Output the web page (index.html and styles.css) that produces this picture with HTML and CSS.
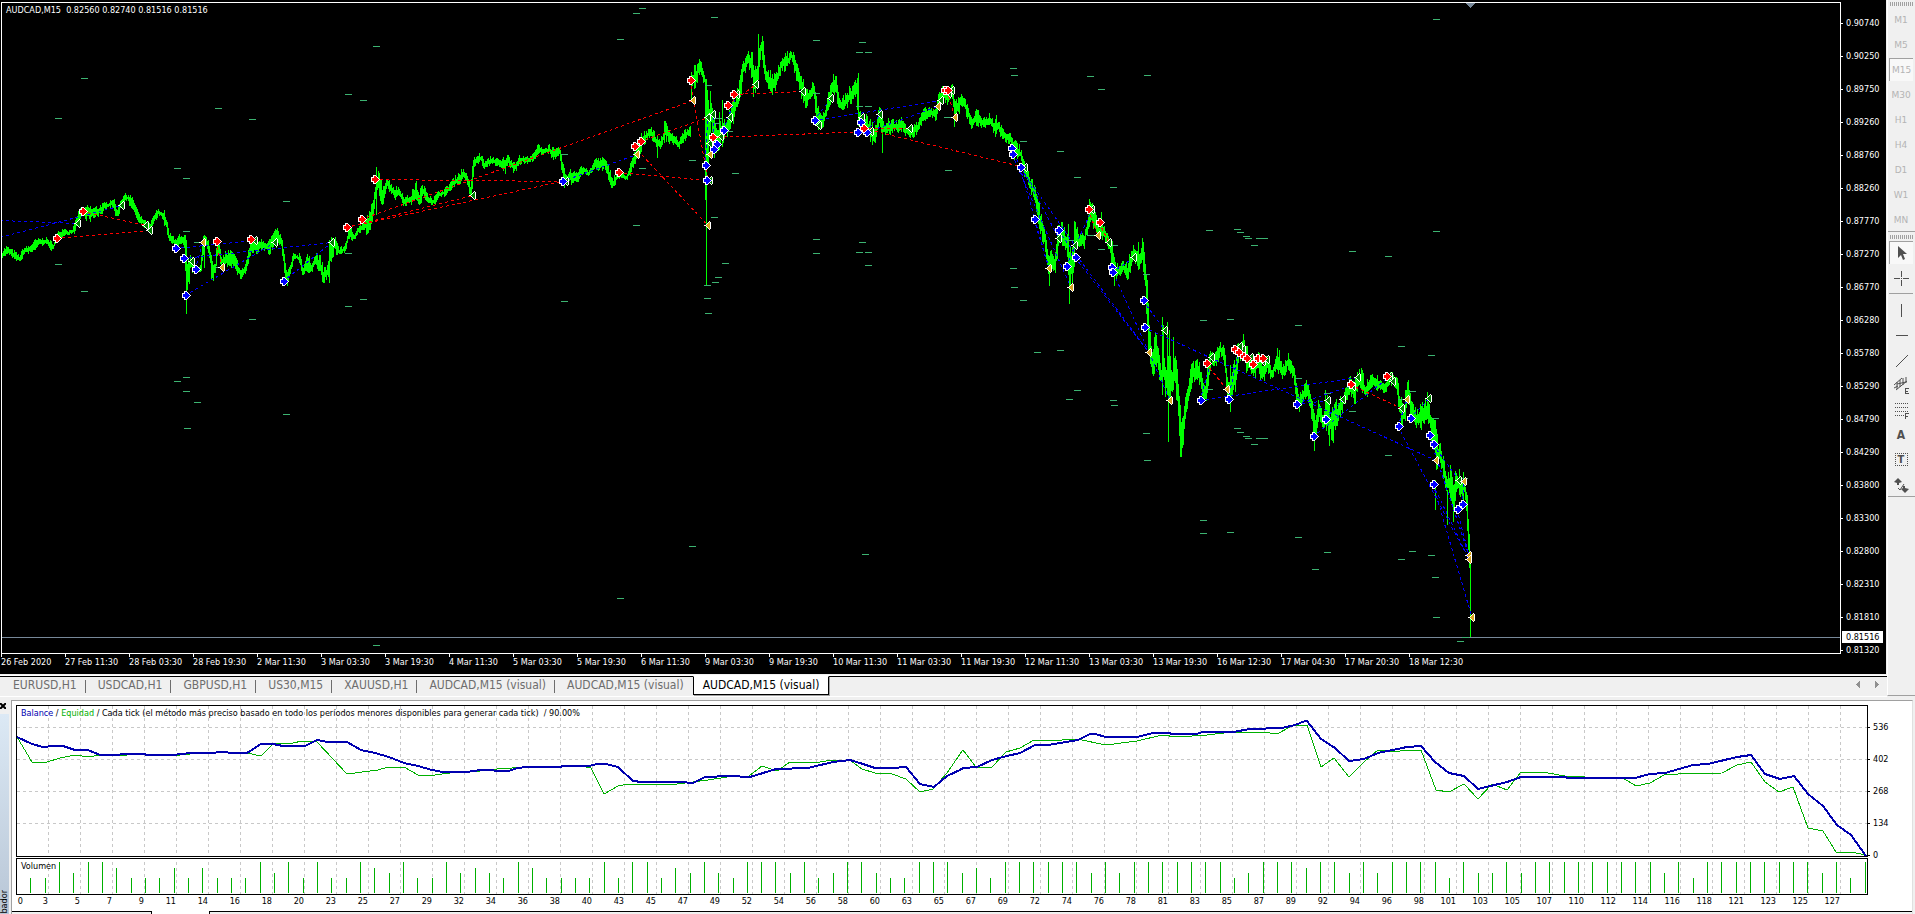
FILE: index.html
```html
<!DOCTYPE html>
<html lang="es">
<head>
	<meta charset="UTF-8">
	<title>AUDCAD,M15 (visual)</title>
	<link rel="stylesheet" href="styles.css">
</head>
<body>

<div class="workspace">
	<main class="window">
		<section class="chart">
			<div class="plot">
				<p class="quote">AUDCAD,M15&nbsp; 0.82560 0.82740 0.81516 0.81516</p>
				<svg class="price" id="price" role="img" aria-label="AUDCAD M15"></svg>
			</div>
			<div class="scale">
				<ol id="prices"></ol>
				<span class="bid">0.81516</span>
			</div>
			<ol class="dates" id="dates"></ol>
		</section>
		<nav class="tabs">
			<a href="#">EURUSD,H1</a>
			<a href="#">USDCAD,H1</a>
			<a href="#">GBPUSD,H1</a>
			<a href="#">US30,M15</a>
			<a href="#">XAUUSD,H1</a>
			<a href="#">AUDCAD,M15 (visual)</a>
			<a href="#">AUDCAD,M15 (visual)</a>
			<a href="#" class="active">AUDCAD,M15 (visual)</a>
			<span class="scroll">
				<button type="button" aria-label="Anterior"><svg width="4" height="7"><path d="M4 0v7L0 3.500z"/></svg></button>
				<button type="button" aria-label="Siguiente"><svg width="4" height="7"><path d="M0 0v7l4-3.500z"/></svg></button>
			</span>
		</nav>
	</main>

	<aside class="toolbar">
		<div class="group">
			<i class="grip"></i>
			<button type="button">M1</button>
			<button type="button">M5</button>
			<button type="button" class="pressed">M15</button>
			<button type="button">M30</button>
			<button type="button">H1</button>
			<button type="button">H4</button>
			<button type="button">D1</button>
			<button type="button">W1</button>
			<button type="button">MN</button>
		</div>
		<div class="group tools">
			<i class="grip"></i>
			<button type="button" class="pressed" aria-label="Cursor"><svg width="18" height="18"><path class="fill" d="M5 2v12l3-3 2 5 2-1-2-5h4z"/></svg></button>
			<button type="button" aria-label="Cruz"><svg width="18" height="18"><path d="M9.500 2v6M9.500 11v6M2 9.500h6M11 9.500h6M9 9.500h1"/></svg></button>
			<i class="rule"></i>
			<button type="button" aria-label="Línea vertical"><svg width="18" height="18"><path d="M9.500 3v13"/></svg></button>
			<button type="button" aria-label="Línea horizontal"><svg width="18" height="18"><path d="M4 9.500h12"/></svg></button>
			<button type="button" aria-label="Línea de tendencia"><svg width="18" height="18"><path class="smooth" d="M4 16L16 4"/></svg></button>
			<button type="button" aria-label="Canal equidistante"><svg width="18" height="18"><path class="smooth" d="M2 9L10 2M4 14L15 5M5 6v7M8 4v7M11 2v7M14 1v6M2 12l4-2M5 8l9-2"/><path d="M13.500 12v6M13 12.500h4M13 15h3M13 17.500h4"/></svg></button>
			<button type="button" aria-label="Fibonacci"><svg width="18" height="18"><path class="dots" d="M3 2.500h13M3 6.500h13M3 10.500h13M3 14.500h9"/><path d="M13.500 12v6M13 12.500h4M13 15.500h3"/></svg></button>
			<button type="button" class="letter" aria-label="Texto">A</button>
			<button type="button" class="letter" aria-label="Etiqueta"><span class="label">T</span></button>
			<button type="button" aria-label="Flechas"><svg width="18" height="18"><path class="fill" d="M2 6l4-4 4 4-3 1v2H5V7zM9 13l2-1v-2h2v2l4 1-4 4z"/><path class="smooth" d="M6 12l2 2 4-6"/></svg></button>
		</div>
	</aside>
</div>

<div class="tester">
	<div class="side">
		<button type="button" aria-label="Cerrar"><svg width="6" height="6"><path d="M0 0l6 6M6 0L0 6"/></svg></button>
		<div class="caption"><span>bador</span></div>
	</div>
	<div class="report">
		<div class="graphs">
			<div class="balance">
				<p class="legend"><b>Balance</b> / <i>Equidad</i> / Cada tick (el método más preciso basado en todo los períodos menores disponibles para generar cada tick)&nbsp; / 90.00%</p>
				<svg id="balance" role="img" aria-label="Balance"></svg>
			</div>
			<ol class="amounts">
				<li>536</li>
				<li>402</li>
				<li>268</li>
				<li>134</li>
				<li>0</li>
			</ol>
			<div class="volume">
				<p class="legend">Volumen</p>
				<svg id="volume" role="img" aria-label="Volumen"></svg>
			</div>
			<ol class="trades" id="trades"></ol>
		</div>
		<div class="sheets"><i></i><i class="open"></i><i></i></div>
	</div>
</div>

<script src="script.js"></script>
</body>
</html>
```

FILE: styles.css
```css
* {
	box-sizing: border-box;
	margin: 0;
	padding: 0;
}

body {
	display: flex;
	flex-flow: column;
	height: 100vh;
	overflow: hidden;
	background: #f0f0f0;
	color: #000;
	font: 9px/12px "DejaVu Sans Condensed", "DejaVu Sans", sans-serif;
}

ol {
	list-style: none;
}

svg {
	display: block;
	shape-rendering: crispEdges;
}

button {
	border: 0;
	background: none;
	font: inherit;
	color: inherit;
}

a {
	color: inherit;
	text-decoration: none;
}

.workspace {
	display: flex;
}

.window {
	flex: 1;
	min-width: 0;
}

/* price chart */

.chart {
	display: grid;
	grid-template-columns: 1fr 45px;
	padding: 2px 0 0 1px;
	margin-right: 1px;
	background: #000;
	color: #fff;
}

.plot {
	position: relative;
	border: 1px solid #fff;
	overflow: hidden;
}

.price {
	width: 100%;
	height: 650px;
}

.quote {
	position: absolute;
	left: 4px;
	top: 1px;
	white-space: pre;
}

.scale {
	position: relative;
	padding-top: 15px;
}

.scale li {
	display: flex;
	align-items: center;
	height: 12px;
	margin-bottom: 21px;
}

.scale li:last-child {
	margin-bottom: -4px;
}

.scale li::before {
	content: "";
	width: 2px;
	height: 1px;
	margin-right: 3px;
	background: #fff;
}

.bid {
	position: absolute;
	left: 1px;
	top: 629px;
	width: 41px;
	padding-left: 4px;
	background: #fff;
	color: #000;
}

.dates {
	grid-column: 1 / 3;
	display: flex;
	height: 20px;
}

.dates li {
	flex: none;
	width: 64px;
	line-height: 10px;
	white-space: nowrap;
}

.dates li::before {
	content: "";
	display: block;
	width: 1px;
	height: 3px;
	background: #fff;
}

/* window tabs */

.tabs {
	display: flex;
	height: 21px;
	margin-top: 2px;
	padding-left: 1px;
	border-top: 1px solid #000;
	border-bottom: 1px solid #fff;
	box-shadow: 0 -1px #fff;
	font-size: 12px;
	line-height: 17px;
	color: #6d6d6d;
}

.tabs a {
	position: relative;
	padding: 0 9px 0 12px;
	white-space: nowrap;
}

.tabs a::after {
	content: "";
	position: absolute;
	right: 0;
	top: 3px;
	width: 1px;
	height: 13px;
	background: #6d6d6d;
}

.tabs a:nth-child(7)::after,
.tabs .active::after {
	display: none;
}

.tabs .active {
	height: 19px;
	margin-top: -1px;
	padding: 0 9px;
	border: 1px solid #000;
	border-top-color: #fff;
	background: #fff;
	box-shadow: 1px 1px #a0a0a0;
	color: #000;
}

.scroll {
	display: flex;
	gap: 15px;
	margin: 0 8px 4px auto;
	fill: #909090;
}

/* toolbar */

.toolbar {
	width: 28px;
	height: 696px;
	border-left: 1px solid #fff;
	border-bottom: 1px solid #a0a0a0;
	color: #b4b4b4;
}

.group {
	display: flex;
	flex-flow: column;
	border-bottom: 1px solid #a0a0a0;
	padding: 2px 2px 0 1px;
}

.group button {
	display: flex;
	align-items: center;
	justify-content: center;
	height: 23px;
	margin-top: 2px;
	font: 9px/12px "DejaVu Sans", sans-serif;
}

.group .pressed {
	border: 1px solid #a0a0a0;
	border-width: 1px 0 0 1px;
	background: #f8f8f8;
}

.grip {
	height: 4px;
	margin-left: 1px;
	background: repeating-linear-gradient(90deg, #a0a0a0 0 1px, transparent 1px 2px);
}

.tools {
	color: #505050;
}

.tools .grip {
	margin-top: 1px;
}

.tools svg {
	fill: none;
	stroke: currentColor;
}

.tools .fill {
	fill: currentColor;
	stroke: none;
	shape-rendering: auto;
}

.tools .smooth {
	shape-rendering: auto;
}

.tools .dots {
	stroke-dasharray: 1 1;
}

.tools .letter {
	font: bold 12px/14px "DejaVu Sans Condensed", sans-serif;
}

.label {
	width: 13px;
	height: 13px;
	border: 1px dotted #505050;
	font-size: 11px;
	line-height: 11px;
}

.rule {
	height: 1px;
	margin: 4px 0 2px;
	background: #a0a0a0;
}

/* strategy tester */

.tester {
	flex: 1;
	display: flex;
	padding-top: 3px;
}

.side {
	display: flex;
	flex-flow: column;
	width: 11px;
}

.side button {
	display: flex;
	align-items: flex-start;
	height: 14px;
	padding-top: 3px;
	stroke: #000;
	stroke-width: 2;
}

.side svg {
	shape-rendering: auto;
}

.caption {
	display: flex;
	align-items: flex-end;
	flex: 1;
	width: 9px;
	background: linear-gradient(#dce9f5, #b8c6d6);
}

.caption span {
	width: 9px;
	line-height: 9px;
	writing-mode: vertical-rl;
	transform: rotate(180deg);
}

.report {
	flex: 1;
	display: flex;
	flex-flow: column;
	min-width: 0;
	margin-right: 2px;
	border: 1px solid #a0a0a0;
	border-width: 1px 1px 0;
	border-right-color: #e0e0e0;
	background: #fff;
}

.graphs {
	flex: 1;
	display: grid;
	grid-template-columns: 1fr 44px;
	align-content: start;
	row-gap: 1px;
	padding: 4px 0 0 4px;
}

.balance,
.volume {
	position: relative;
	border: 1px solid #000;
	overflow: hidden;
}

.balance svg {
	width: 100%;
	height: 150px;
}

.volume {
	grid-column: 1;
}

.volume svg {
	width: 100%;
	height: 35px;
}

.legend {
	position: absolute;
	left: 4px;
	top: 1px;
	white-space: pre;
}

.legend b {
	font-weight: normal;
	color: #0000b0;
}

.legend i {
	font-style: normal;
	color: #00b000;
}

.amounts {
	padding-top: 16px;
	white-space: nowrap;
}

.amounts li {
	display: flex;
	align-items: center;
	height: 12px;
	margin-bottom: 20px;
}

.amounts li:last-child {
	margin-bottom: -8px;
}

.amounts li::before {
	content: "";
	width: 2px;
	height: 1px;
	margin-right: 3px;
	background: #000;
}

.trades {
	display: flex;
	grid-column: 1 / 3;
	line-height: 10px;
}

.trades li {
	flex: none;
	width: 32px;
	text-align: right;
}

.trades li:first-child {
	width: 7px;
	margin-right: -7px;
}

.sheets {
	display: flex;
	height: 3px;
}

.sheets i {
	width: 140px;
	border: 1px solid #000;
	border-width: 1px 1px 0 0;
	background: #f0f0f0;
}

.sheets .open {
	width: 57px;
	border: 0;
	background: #fff;
}

.sheets i:last-child {
	flex: 1;
	border-width: 1px 0 0 1px;
}

/* chart drawing */

.bars { stroke: #0f0; }
.levels { stroke: #3cb371; }
.bid-line { stroke: #778899; }
.shift { fill: #778899; }
.sell-line, .buy-line { fill: none; stroke: #f00; stroke-dasharray: 3 3; }
.buy-line { stroke: #00f; }
.mark { stroke: #fff; stroke-width: 2; stroke-miterlimit: 2; paint-order: stroke; }
.sell { fill: #f00; }
.buy { fill: #00f; }
.close { fill: #008000; }
.stop { fill: #daa520; }

.grid { stroke: #c8c8c8; stroke-dasharray: 3 3; }
.balance-line { fill: none; stroke: #0000b0; stroke-width: 2; }
.equity-line { fill: none; stroke: #00b000; }
.lots { stroke: #00b000; }
```

FILE: script.js
```js
// centre line of the price: x, y, half height of the noise around it
var trend = [
	2,254,3, 6,250,3, 12,254,3, 19,259,3, 23,251,3, 30,249,4, 37,243,3, 43,241,3, 48,243,3, 52,248,2, 57,236,3, 63,231,3,
	67,233,2, 73,230,3, 77,218,4, 80,213,4, 86,213,6, 91,214,5, 97,212,4, 103,207,3, 108,205,3, 112,202,4, 116,214,3,
	119,206,4, 123,199,4, 127,198,4, 132,204,4, 138,218,3, 144,224,3, 150,227,3, 154,217,3, 158,212,2, 163,217,5, 166,226,3,
	168,237,3, 173,241,4, 177,244,5, 180,240,3, 184,243,6, 186,285,10, 188,270,10, 190,262,5, 194,270,3, 200,268,3, 203,240,4,
	207,244,4, 212,272,8, 215,265,4, 217,242,3, 220,262,4, 225,259,6, 230,258,6, 235,264,5, 240,275,3, 245,268,4, 250,246,6,
	256,248,6, 262,244,4, 268,248,6, 273,240,5, 276,235,5, 281,243,3, 284,268,5, 286,280,4, 290,268,3, 293,256,2, 299,258,4,
	302,272,4, 306,262,6, 310,268,4, 315,260,6, 319,264,6, 322,277,6, 327,272,6, 330,250,8, 334,243,5, 338,252,3, 344,249,3,
	349,231,4, 353,238,3, 357,230,3, 361,228,3, 366,224,7, 370,220,8, 373,205,4, 376,180,8, 380,190,8, 382,195,8, 386,183,4,
	390,188,4, 393,193,5, 398,192,4, 404,202,4, 410,200,5, 415,190,6, 418,200,6, 422,190,4, 427,198,4, 432,202,3, 438,195,3,
	444,192,3, 450,186,4, 457,179,5, 464,174,3, 468,186,4, 470,193,4, 472,170,5, 474,162,4, 480,158,3, 484,166,3, 490,160,3,
	496,162,3, 502,165,5, 507,160,4, 513,167,4, 520,160,3, 526,160,3, 532,158,3, 538,148,3, 543,152,3, 548,149,4, 554,155,4,
	559,152,3, 561,165,4, 564,178,4, 570,177,6, 576,176,5, 582,170,3, 588,174,2, 594,164,5, 600,163,5, 604,164,4, 608,174,5,
	612,184,4, 617,176,3, 622,175,2, 626,178,2, 630,168,4, 634,158,5, 638,148,6, 643,138,5, 650,132,4, 656,142,4, 660,144,4,
	664,132,8, 667,134,6, 672,138,4, 678,145,3, 682,137,4, 686,133,3, 690,131,4, 691,80,8, 696,75,6, 698,66,5, 702,73,4,
	705,85,5, 707,140,20, 710,110,15, 713,130,15, 715,137,15, 719,135,12, 723,130,8, 727,126,8, 731,112,12, 734,108,6,
	738,92,6, 740,85,8, 742,70,5, 745,64,8, 747,58,6, 750,64,8, 752,70,10, 754,82,12, 757,72,8, 758,55,10, 760,48,8,
	762,46,8, 764,72,5, 768,80,7, 773,84,6, 776,78,5, 780,66,6, 784,62,7, 788,60,4, 790,55,3, 793,60,6, 796,72,6, 800,85,8,
	805,98,8, 808,97,4, 812,88,4, 814,95,6, 816,115,8, 820,122,6, 824,115,4, 828,100,6, 832,85,7, 835,84,6, 838,104,4,
	842,105,6, 848,98,8, 853,92,6, 857,85,6, 858,115,8, 862,125,5, 865,122,6, 870,132,8, 874,136,6, 879,115,8, 883,130,4,
	888,126,6, 895,127,5, 900,124,5, 905,130,5, 911,132,5, 917,128,4, 922,116,5, 928,112,4, 935,115,4, 938,100,5, 942,92,5,
	946,98,5, 951,90,4, 954,110,8, 960,100,4, 963,102,5, 966,110,5, 971,124,4, 976,115,6, 980,123,4, 985,123,4, 989,120,5,
	993,127,8, 998,127,6, 1003,136,4, 1007,138,4, 1010,139,5, 1014,150,7, 1020,154,4, 1024,170,5, 1030,185,6, 1035,197,7,
	1039,220,8, 1043,235,6, 1045,245,5, 1048,270,8, 1051,258,8, 1054,264,8, 1058,234,6, 1061,232,8, 1066,244,8, 1069,265,18,
	1072,265,14, 1074,240,12, 1078,240,6, 1083,242,6, 1087,225,6, 1090,212,8, 1095,222,8, 1098,232,6, 1102,230,8, 1106,238,5,
	1110,248,8, 1114,268,6, 1118,272,5, 1122,266,5, 1126,273,7, 1131,258,6, 1134,252,8, 1138,260,6, 1142,252,10, 1145,280,10,
	1147,320,15, 1149,345,10, 1152,370,8, 1154,350,12, 1157,355,8, 1160,375,5, 1162,370,15, 1165,375,15, 1168,375,15,
	1171,380,12, 1174,370,15, 1176,380,10, 1178,400,12, 1180,440,12, 1182,430,10, 1186,400,8, 1191,375,8, 1196,370,8,
	1200,375,5, 1203,397,6, 1206,385,8, 1210,358,5, 1214,360,6, 1219,350,6, 1223,352,6, 1227,390,10, 1230,392,12, 1234,375,12,
	1238,350,8, 1243,350,10, 1248,364,5, 1254,370,6, 1258,358,8, 1261,375,8, 1266,362,6, 1271,374,5, 1277,360,8, 1282,372,6,
	1287,362,5, 1293,374,5, 1296,395,6, 1298,405,6, 1302,395,6, 1306,388,5, 1310,405,8, 1314,432,8, 1318,408,6, 1322,425,5,
	1326,410,12, 1330,425,12, 1334,420,12, 1338,412,8, 1343,400,6, 1349,388,8, 1354,392,8, 1358,380,8, 1361,378,8, 1364,392,6,
	1370,383,6, 1378,384,4, 1384,388,4, 1390,378,5, 1396,385,6, 1401,418,10, 1404,410,10, 1407,388,5, 1410,405,8, 1415,420,8,
	1420,415,10, 1427,408,10, 1430,425,10, 1434,435,10, 1436,460,15, 1438,452,8, 1442,465,8, 1446,485,8, 1450,480,12,
	1453,495,10, 1456,480,5, 1459,490,8, 1462,485,8, 1464,490,5, 1466,505,8, 1468,540,10, 1470,570,6
];

// long bars: x, high, low
var spikes = [
	186,240,314, 204,235,268, 211,255,280, 276,230,248, 322,262,282, 329,240,283, 376,167,215, 381,180,203, 505,165,174,
	564,172,188, 611,178,188, 657,140,158, 664,123,140, 691,72,100, 705,85,200, 706,110,286, 708,100,160, 710,92,130,
	714,115,158, 719,112,150, 722,100,140, 758,34,70, 762,40,60, 753,80,97, 772,78,95, 812,82,96, 857,79,110, 882,120,153,
	874,130,142, 954,105,127, 1049,265,286, 1069,275,304, 1068,224,275, 1074,221,260, 1089,199,220, 1101,212,235,
	1114,265,286, 1138,242,270, 1143,242,258, 1162,317,385, 1163,325,370, 1167,322,395, 1168,390,442, 1169,330,400,
	1173,337,390, 1176,365,400, 1180,430,457, 1155,332,360, 1230,365,412, 1243,334,360, 1277,348,370, 1288,353,370,
	1306,380,395, 1314,425,451, 1325,390,425, 1329,410,446, 1333,410,443, 1361,368,390, 1408,380,400, 1427,392,410,
	1435,480,510, 1447,490,525, 1450,477,500, 1453,505,522, 1459,469,495, 1463,472,500, 1469,534,565, 1470,560,637
];

var levels = [
	84,78, 58,118, 177,168, 186,178, 218,108, 252,119, 286,201, 348,94, 363,100, 376,46, 58,264, 84,291, 186,231, 197,242,
	218,267, 348,253, 348,306, 363,299, 252,319, 186,377, 177,381, 186,391, 197,402, 187,428, 286,414, 376,645, 642,8, 636,13,
	620,39, 714,17, 816,40, 862,42, 859,52, 868,52, 708,85, 816,93, 859,106, 868,106, 718,118, 716,123, 729,131, 564,154,
	692,160, 642,168, 735,173, 636,225, 714,217, 816,239, 816,253, 862,242, 859,252, 868,252, 868,265, 725,263, 718,277,
	715,282, 707,285, 707,298, 708,313, 564,301, 947,117, 948,170, 692,546, 620,598, 865,554, 1013,68, 1014,75, 1090,76,
	1101,89, 1147,75, 1436,19, 1023,141, 1060,151, 1077,177, 1113,187, 1090,235, 1101,249, 1114,245, 1070,240, 1013,268,
	1014,287, 1023,300, 1146,274, 1209,230, 1237,229, 1240,232, 1246,236, 1248,238, 1259,238, 1264,238, 1254,245, 1352,251,
	1388,256, 1436,231, 1203,320, 1230,319, 1298,325, 1037,352, 1060,350, 1077,390, 1069,399, 1113,400, 1114,405, 1146,433,
	1209,389, 1298,378, 1327,393, 1352,411, 1401,346, 1431,355, 1412,391, 1401,399, 1435,418, 1237,428, 1240,432, 1246,436,
	1248,438, 1259,438, 1264,438, 1254,444, 1388,455, 1147,460, 1203,520, 1203,533, 1230,532, 1298,537, 1327,552, 1315,569,
	1401,559, 1412,551, 1431,555, 1435,577, 1436,617, 1460,641, 1465,637, 1464,478
];

// orders: x1, y1, x2, y2
var sells = [
	56,238,150,230, 82,211,146,225, 216,241,222,267, 374,179,562,181, 346,227,473,195, 346,227,562,181, 361,219,693,100,
	618,172,708,180, 634,146,708,225, 640,141,708,117, 690,80,708,180, 712,137,871,131, 727,105,756,84, 733,94,803,91,
	863,128,910,128, 863,128,1025,167, 947,90,955,117, 1088,209,1098,235, 1099,222,1109,242, 1206,363,1227,389,
	1350,384,1402,408, 1386,376,1393,381
];

var buys = [
	0,220,78,223, 0,237,122,205, 175,248,255,240, 183,258,332,242, 195,269,203,242, 185,295,275,242, 283,281,332,242,
	562,181,637,154, 705,165,708,117, 713,149,713,114, 723,130,737,94, 814,120,831,98, 814,120,941,100, 866,132,938,106,
	866,132,880,114, 1011,148,1059,238, 1020,167,1049,268, 1012,154,1071,287, 1034,219,1049,268, 1058,230,1149,352,
	1066,266,1092,209, 1075,257,1149,352, 1111,267,1149,352, 1112,272,1134,257, 1020,167,1075,245, 1143,300,1165,330,
	1149,352,1170,400, 1144,327,1436,460, 1200,400,1212,357, 1200,400,1358,377, 1228,399,1240,346, 1296,404,1358,383,
	1296,404,1328,400, 1313,436,1390,376, 1325,419,1343,399, 1398,426,1407,399, 1398,426,1469,559, 1410,418,1429,398,
	1429,435,1469,555, 1433,444,1459,480, 1433,484,1472,617, 1433,484,1469,559, 1462,504,1464,481, 1457,509,1469,555
];

var marks = {
	close: [
		78,223, 122,205, 146,225, 150,230, 192,261, 255,240, 275,242, 332,242, 473,195, 566,181, 708,117, 713,114, 710,143,
		710,180, 721,136, 730,117, 737,94, 756,84, 803,91, 831,98, 819,125, 862,117, 871,131, 880,114, 910,128, 941,100,
		949,93, 952,90, 1025,167, 1059,238, 1075,245, 1092,209, 1109,242, 1134,257, 1165,330, 1212,357, 1243,349, 1240,346,
		1251,357, 1263,361, 1267,359, 1328,400, 1343,399, 1353,386, 1358,377, 1390,376, 1393,381, 1402,408, 1429,398, 1459,480
	],
	stop: [
		203,242, 222,267, 637,154, 693,100, 708,225, 710,154, 938,106, 955,117, 1049,268, 1071,287, 1098,235, 1149,352,
		1170,400, 1227,389, 1407,399, 1436,460, 1464,481, 1469,555, 1469,559, 1472,617
	],
	buy: [
		175,248, 183,258, 195,269, 185,295, 283,281, 562,181, 814,120, 860,122, 857,132, 866,132, 723,130, 716,144, 713,149,
		705,165, 706,180, 1011,148, 1012,154, 1020,167, 1034,219, 1058,230, 1066,266, 1075,257, 1111,267, 1112,272, 1143,300,
		1144,327, 1200,400, 1228,399, 1296,404, 1313,436, 1325,419, 1398,426, 1410,418, 1429,435, 1433,444, 1433,484,
		1457,509, 1462,504
	],
	sell: [
		56,238, 82,211, 216,241, 250,239, 346,227, 361,219, 374,179, 634,146, 640,141, 618,172, 690,80, 712,137, 727,105,
		733,94, 863,128, 944,90, 947,90, 1088,209, 1099,222, 1206,363, 1234,349, 1238,352, 1243,356, 1246,358, 1252,364,
		1257,358, 1262,358, 1350,384, 1386,376
	]
};

var balance = "17,737 32,744 43,747 53,746 63,746 75,750 88,750 100,755 113,755 127,754 143,754 148,755 173,755 190,753 210,753 222,752 233,753 247,753 261,744 273,744 283,746 305,746 317,740 328,742 347,742 361,750 375,753 389,757 404,763 418,766 432,770 443,772 467,772 480,770 508,771 518,768 527,767 560,767 563,766 589,766 597,764 606,764 618,767 633,781 642,782 680,782 693,783 705,777 730,776 750,777 776,769 808,768 833,762 850,760 863,764 875,768 893,768 906,767 920,784 934,787 947,776 960,770 963,768 977,767 992,760 1007,756 1020,753 1035,745 1048,745 1078,740 1090,734 1095,734 1106,737 1137,737 1153,733 1168,733 1173,734 1197,734 1202,732 1233,732 1250,729 1282,728 1295,725 1305,721 1307,721 1321,739 1335,748 1349,761 1364,759 1378,753 1407,747 1421,746 1435,762 1449,773 1464,776 1478,789 1507,782 1521,777 1565,777 1568,778 1635,778 1650,774 1665,773 1693,765 1708,764 1737,757 1751,755 1765,774 1780,779 1794,776 1808,794 1823,806 1837,825 1851,835 1866,856";
var equity = "17,737 32,762 47,762 60,758 75,755 88,757 100,755 127,755 143,754 148,755 180,755 190,754 222,752 247,753 261,756 273,744 293,743 302,741 310,741 317,742 333,759 347,774 378,770 388,767 404,767 418,775 435,775 450,773 467,772 480,771 497,769 527,767 559,766 586,767 591,768 604,794 618,786 628,784 677,784 693,782 708,780 727,777 749,776 762,766 777,771 790,762 820,762 832,760 851,761 862,769 875,773 892,774 906,779 920,792 933,789 947,773 960,754 963,750 976,767 992,767 1006,752 1020,748 1034,740 1048,741 1077,739 1106,745 1137,741 1162,735 1177,737 1207,735 1232,732 1263,732 1277,734 1292,726 1307,725 1321,767 1334,758 1349,777 1364,762 1378,750 1393,752 1407,750 1421,750 1436,790 1449,792 1464,784 1478,799 1492,784 1507,790 1521,772 1542,772 1565,776 1585,777 1623,778 1636,786 1650,783 1664,775 1678,774 1722,773 1737,765 1751,762 1765,782 1779,792 1793,787 1808,828 1823,831 1836,852 1851,852 1866,855";

// lot size of each trade, 1 to 4
var lots = "11424431113131114241411432411423" +
	"214311114144132421444241244211444" +
	"2314444442424444444124443442424444" +
	"142242444444444241444444442414";
var lotHeight = [0, 15, 20, 25, 31];

function each(list, size, callback) {
	for (var i = 0; i < list.length; i += size) {
		callback.apply(null, list.slice(i, i + size));
	}
}

function path(name, d) {
	return '<path class="' + name + '" d="' + d + '"/>';
}

function list(id, values) {
	document.getElementById(id).innerHTML = values.map(function (value) {
		return "<li>" + value + "</li>";
	}).join("");
}

var seed = 7;
function noise() {
	seed = (seed * 16807) % 2147483647;
	return seed / 2147483647;
}

function bar(x, high, low) {
	return "M" + (x + 0.5) + " " + Math.round(high) + "V" + Math.round(low);
}

function drawPrice() {
	var bars = "", out = "", d, last = trend[1];
	for (var i = 0; i + 3 < trend.length; i += 3) {
		for (var x = trend[i]; x < trend[i + 3]; x++) {
			var t = (x - trend[i]) / (trend[i + 3] - trend[i]);
			var y = trend[i + 1] + (trend[i + 4] - trend[i + 1]) * t;
			var size = trend[i + 2];
			// weekend gap
			if (x === 690) y = 131;
			if (x === 691) last = y;
			bars += bar(x, Math.min(y, last) - size * (0.3 + noise() * 1.2), Math.max(y, last) + size * (0.3 + noise() * 1.2));
			last = y;
		}
	}
	each(spikes, 3, function (x, high, low) {
		bars += bar(x, high, low);
	});
	out += path("bid-line", "M0 637.5H4000") + path("bars", bars);

	d = "";
	each(levels, 2, function (x, y) {
		d += "M" + (x - 3) + " " + (y + 0.5) + "h7";
	});
	out += path("levels", d);

	[["buy-line", buys], ["sell-line", sells]].forEach(function (kind) {
		each(kind[1], 4, function (x1, y1, x2, y2) {
			out += path(kind[0], "M" + x1 + " " + (y1 + 0.5) + "L" + x2 + " " + (y2 + 0.5));
		});
	});

	Object.keys(marks).forEach(function (name) {
		var shape = name === "buy" || name === "sell"
			? "m-2.500 -1.500h2v-2h1l3.500 3.500l-3.500 3.500h-1v-2h-2z"
			: "m1.500 -3.500v7l-4 -3.500z";
		each(marks[name], 2, function (x, y) {
			out += path("mark " + name, "M" + (x + 0.5) + " " + (y + 0.5) + shape);
		});
	});
	out += path("shift", "M1466 3h9l-4.500 5z");
	document.getElementById("price").innerHTML = '<g transform="translate(-2 -3)">' + out + "</g>";
}

function drawTester() {
	var columns = "", rows = "", bars = "", x, i;
	for (x = 48; x <= 1840; x += 32) columns += "M" + (x + 0.5) + " 706V900";
	for (i = 0; i < 4; i++) rows += "M17 " + (727.5 + i * 32) + "H1867";
	for (i = 0; i < lots.length; i++) {
		x = Math.round(17 + (i + 1) * 14.33) - 0.5;
		bars += "M" + x + " 893v-" + lotHeight[lots[i]];
	}
	document.getElementById("balance").innerHTML = '<g transform="translate(-17 -706)">' + path("grid", columns) + path("grid", rows) +
		'<polyline class="equity-line" points="' + equity + '"/><polyline class="balance-line" points="' + balance + '"/></g>';
	document.getElementById("volume").innerHTML = '<g transform="translate(-17 -859)">' + path("grid", columns) + path("lots", bars) + "</g>";
}

list("prices", ["0.90740", "0.90250", "0.89750", "0.89260", "0.88760", "0.88260", "0.87770", "0.87270", "0.86770", "0.86280",
	"0.85780", "0.85290", "0.84790", "0.84290", "0.83800", "0.83300", "0.82800", "0.82310", "0.81810", "0.81320"]);
list("dates", ["26 Feb 2020", "27 Feb 11:30", "28 Feb 03:30", "28 Feb 19:30", "2 Mar 11:30", "3 Mar 03:30", "3 Mar 19:30",
	"4 Mar 11:30", "5 Mar 03:30", "5 Mar 19:30", "6 Mar 11:30", "9 Mar 03:30", "9 Mar 19:30", "10 Mar 11:30", "11 Mar 03:30",
	"11 Mar 19:30", "12 Mar 11:30", "13 Mar 03:30", "13 Mar 19:30", "16 Mar 12:30", "17 Mar 04:30", "17 Mar 20:30", "18 Mar 12:30"]);
list("trades", [0, 3, 5, 7, 9, 11, 14, 16, 18, 20, 23, 25, 27, 29, 32, 34, 36, 38, 40, 43, 45, 47, 49, 52, 54, 56, 58, 60, 63,
	65, 67, 69, 72, 74, 76, 78, 81, 83, 85, 87, 89, 92, 94, 96, 98, 101, 103, 105, 107, 110, 112, 114, 116, 118, 121, 123, 125, 127]);
drawPrice();
drawTester();
```
